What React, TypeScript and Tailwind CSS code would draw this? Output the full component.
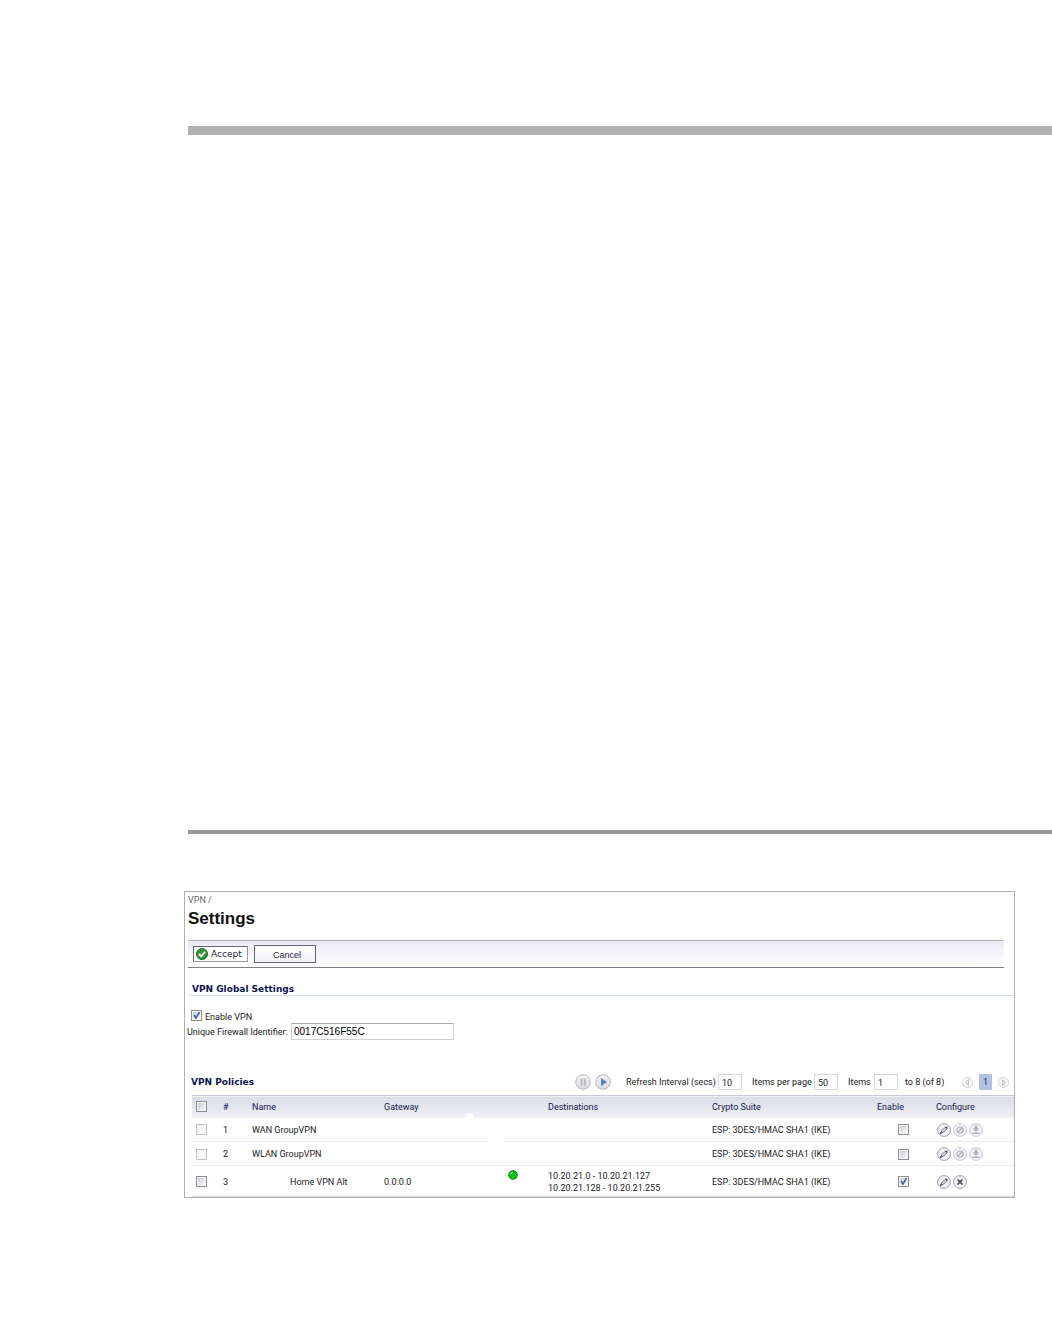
import { useState } from "react";

const policies = [
  { id: 1, name: "WAN GroupVPN", gateway: "", destinations: [], group: true, enabled: false },
  { id: 2, name: "WLAN GroupVPN", gateway: "", destinations: [], group: true, enabled: false },
  {
    id: 3,
    name: "Home VPN Alt",
    gateway: "0.0.0.0",
    destinations: ["10.20.21.0 - 10.20.21.127", "10.20.21.128 - 10.20.21.255"],
    group: false,
    enabled: true,
  },
];

function Checkbox({
  label,
  id,
  defaultChecked = false,
  disabled = false,
}: {
  label: string;
  id?: string;
  defaultChecked?: boolean;
  disabled?: boolean;
}) {
  return (
    <span className="relative block size-[11px]">
      <input
        type="checkbox"
        id={id}
        aria-label={label}
        defaultChecked={defaultChecked}
        disabled={disabled}
        className="peer block size-[11px] appearance-none border border-[#8e8f8f] bg-linear-to-br from-[#c3c8d2] to-white shadow-[inset_0_0_0_1px_#f4f4f4] disabled:border-[#c3c3c3] disabled:from-[#f3f3f3]"
      />
      <svg
        viewBox="0 0 11 11"
        className="pointer-events-none absolute inset-0 hidden size-[11px] peer-checked:block"
      >
        <path d="M3 5l2 3 3.500-6" fill="none" stroke="#4a5fa5" strokeWidth="1.600" />
      </svg>
    </span>
  );
}

function Disc({
  label,
  kind,
  disabled = false,
}: {
  label: string;
  kind: "edit" | "block" | "download" | "delete";
  disabled?: boolean;
}) {
  const ring = disabled ? "#c4c4cc" : "#9a9ba8";
  const ink = disabled ? "#b0b0b8" : "#42434f";
  return (
    <button type="button" aria-label={label} disabled={disabled} className="block size-[14px]">
      <svg viewBox="0 0 14 14" className="block size-[14px]">
        <circle cx="7" cy="7" r="6.400" fill="#f0f0f7" stroke={ring} />
        {kind === "edit" && (
          <g fill="none" stroke={ink}>
            <path d="M4 9.900l.8-2.200 3.400-3.400 1.600 1.600-3.400 3.400z" fill="#e2e2ea" strokeWidth=".8" />
            <path d="M8.700 3.600l1.800 1.800M3.200 10.800l1.300-1.300" strokeWidth="1.300" />
          </g>
        )}
        {kind === "block" && (
          <g fill="none" stroke={ink} strokeWidth="1.200">
            <circle cx="7" cy="7" r="3" />
            <path d="M5 9l4-4" />
          </g>
        )}
        {kind === "download" && (
          <path d="M5.800 2.500h2.400v3h2.300L7 8.800 3.500 5.500h2.300zM3.500 9.500h7V11h-7z" fill={ink} />
        )}
        {kind === "delete" && (
          <path d="M4.500 4.500l5 5M9.500 4.500l-5 5" stroke={ink} strokeWidth="1.700" />
        )}
      </svg>
    </button>
  );
}

function RoundButton({ label, children }: { label: string; children: React.ReactNode }) {
  return (
    <button type="button" aria-label={label} className="block size-4">
      <svg viewBox="0 0 16 16" className="block size-4">
        <defs>
          <linearGradient id="disc" x1="0" y1="0" x2="0" y2="1">
            <stop offset="0" stopColor="#f6f6f8" />
            <stop offset="1" stopColor="#d9d9e0" />
          </linearGradient>
        </defs>
        <circle cx="8" cy="8" r="7.300" fill="url(#disc)" stroke="#b4b4ba" />
        {children}
      </svg>
    </button>
  );
}

function PageArrow({ label, d }: { label: string; d: string }) {
  return (
    <button type="button" aria-label={label} disabled className="block size-[11px]">
      <svg viewBox="0 0 11 11" className="block size-[11px]">
        <circle cx="5.500" cy="5.500" r="5" fill="#fafafa" stroke="#cfcfcf" />
        <path d={d} fill="#e4e4e4" stroke="#b5b5b5" strokeWidth=".8" />
      </svg>
    </button>
  );
}

const smallInput =
  "h-4 w-6 border border-[#d5d6e0] bg-white px-[3px] pt-[2px] text-[9px] leading-3 text-[#222]";

export default function App() {
  const [identifier, setIdentifier] = useState("0017C516F55C");

  return (
    <main className="min-h-screen bg-white pt-[126px] font-[Roboto,sans-serif] text-[9px] leading-3 text-[#222]">
      <div className="ml-[188px] h-[9px] bg-[#b2b2b2]" />
      <div className="mt-[695px] ml-[188px] h-1 bg-[#989898]" />

      <section className="mt-[57px] mr-[37px] ml-[184px] border border-[#b0b0b0] whitespace-nowrap">
        <header className="px-[3px] pt-[2px]">
          <p className="pb-px text-[#666]">VPN /</p>
          <h1 className="font-['Liberation_Sans',sans-serif] text-[17px] leading-6 font-bold text-[#111]">
            Settings
          </h1>
        </header>

        <div className="mt-[9px] mr-[10px] ml-[3px] flex h-7 gap-[6px] border-t border-b border-t-[#b4b4c4] border-b-[#7d7d8b] bg-linear-to-b from-[#ebebf5] to-white px-[5px] pt-1">
          <button
            type="button"
            className="mt-px flex h-4 w-[55px] items-center gap-[3px] border border-[#65656f] border-r-[#999] border-b-[#999] bg-white pl-[2px] font-['DejaVu_Sans',sans-serif] text-[9px] text-[#26263c]"
          >
            <svg viewBox="0 0 12 12" className="size-3">
              <circle cx="6" cy="6" r="5.500" fill="#2f9432" stroke="#1e7324" />
              <path d="M3 6l2.200 2.300L9 3.800" fill="none" stroke="#fff" strokeWidth="2" />
            </svg>
            Accept
          </button>
          <button
            type="button"
            className="h-[18px] w-[62px] border border-[#65656f] bg-linear-to-b from-white to-[#f2f2f6] pt-px pl-1 font-['Liberation_Sans',sans-serif] text-[9px] text-[#26264c]"
          >
            Cancel
          </button>
        </div>

        <h2 className="mt-4 ml-[3px] border-b border-[#d0dde2] pl-1 font-['DejaVu_Sans',sans-serif] text-[9px] leading-[11px] font-bold text-[#0b1450]">
          VPN Global Settings
        </h2>

        <div className="mt-[14px] ml-[6px] flex gap-[3px]">
          <Checkbox id="enable-vpn" label="Enable VPN" defaultChecked />
          <label htmlFor="enable-vpn" className="mt-[2px] leading-[11px]">
            Enable VPN
          </label>
        </div>
        <div className="ml-[2px] flex items-center">
          <label htmlFor="identifier" className="w-[104px]">
            Unique Firewall Identifier:
          </label>
          <input
            id="identifier"
            value={identifier}
            onChange={(e) => setIdentifier(e.target.value)}
            className="h-[17px] w-[163px] border border-[#d0d0d0] border-t-[#aaa] bg-white px-[2px] font-['Liberation_Sans',sans-serif] text-[10px] text-black"
          />
        </div>

        <div className="mt-[34px] flex h-4 items-center pr-[5px] pl-[6px]">
          <h2 className="mr-auto font-['DejaVu_Sans',sans-serif] text-[9px] font-bold text-[#0b1450]">
            VPN Policies
          </h2>
          <div className="mr-[15px] flex gap-1">
            <RoundButton label="Pause">
              <path d="M5.500 4.500h2v7h-2zM8.800 4.500h2v7h-2z" fill="#b7b7bf" />
            </RoundButton>
            <RoundButton label="Refresh">
              <path d="M6 4l6 4-6 4z" fill="#5482c9" />
            </RoundButton>
          </div>
          <label htmlFor="refresh" className="w-[92px]">Refresh Interval (secs)</label>
          <input id="refresh" defaultValue="10" className={smallInput} />
          <label htmlFor="per-page" className="ml-[10px] w-[62px]">Items per page</label>
          <input id="per-page" defaultValue="50" className={smallInput} />
          <label htmlFor="first-item" className="ml-[10px] w-[26px]">Items</label>
          <input id="first-item" defaultValue="1" className={smallInput} />
          <span className="ml-[7px] w-[57px]">to 8 (of 8)</span>
          <PageArrow label="Previous page" d="M6.500 2.500v6l-3-3z" />
          <button type="button" className="mx-[6px] h-4 w-[13px] bg-[#b3c1e3] text-[#22305f]">
            1
          </button>
          <PageArrow label="Next page" d="M4.500 2.500v6l3-3z" />
        </div>

        <div className="mt-[5px] pl-[7px]">
          <table className="w-full table-fixed border-collapse text-left">
            <colgroup>
              <col className="w-[30px]" />
              <col className="w-[30px]" />
              <col className="w-[132px]" />
              <col className="w-[124px]" />
              <col className="w-[40px]" />
              <col />
              <col className="w-[165px]" />
              <col className="w-[59px]" />
              <col className="w-[78px]" />
            </colgroup>
            <thead>
              <tr className="h-[22px] border-t border-[#c5cad8] bg-linear-to-b from-[#dadeea] to-[#f1f1f4] text-[#14184e]">
                <th className="pl-1">
                  <Checkbox label="Select all policies" />
                </th>
                <th className="pl-px font-normal">#</th>
                <th className="font-normal">Name</th>
                <th className="relative font-normal">
                  Gateway
                  <span className="absolute bottom-0 left-[81px] h-[5px] w-2 rounded-t-full bg-white" />
                </th>
                <th />
                <th className="font-normal">Destinations</th>
                <th className="font-normal">Crypto Suite</th>
                <th className="font-normal">Enable</th>
                <th className="font-normal">Configure</th>
              </tr>
            </thead>
            <tbody className="[&_td]:pt-px">
              {policies.map((p) => (
                <tr
                  key={p.id}
                  className={p.group ? "h-6 border-b border-[#ededf0]" : "h-[31px] border-b border-[#d8d8dc]"}
                >
                  <td className="pl-1">
                    <Checkbox label={"Select " + p.name} disabled={p.group} />
                  </td>
                  <td className="pl-px">{p.id}</td>
                  <td className={p.group ? "" : "pl-[38px]"}>{p.name}</td>
                  <td className="relative">
                    {p.gateway}
                    {p.id === 1 && (
                      <span className="absolute -bottom-px left-[105px] h-[2px] w-[15px] bg-white" />
                    )}
                  </td>
                  <td className="align-top">
                    {p.destinations.length > 0 && (
                      <svg viewBox="0 0 10 10" className="mt-[3px] size-[10px]" role="img" aria-label="Active">
                        <circle cx="5" cy="5" r="4.300" fill="#08c414" stroke="#08850f" />
                        <path d="M2.300 4.500a2.500 2.500 0 0 1 2.500-2.200l-1 1.500z" fill="#e5ffe5" />
                      </svg>
                    )}
                  </td>
                  <td>
                    {p.destinations.map((d) => (
                      <div key={d}>{d}</div>
                    ))}
                  </td>
                  <td>ESP: 3DES/HMAC SHA1 (IKE)</td>
                  <td className="pl-[21px]">
                    <Checkbox label={"Enable " + p.name} defaultChecked={p.enabled} />
                  </td>
                  <td>
                    <div className="flex gap-[2px] pl-px">
                      <Disc kind="edit" label="Edit" />
                      {p.group ? (
                        <>
                          <Disc kind="block" label="Delete" disabled />
                          <Disc kind="download" label="Export" disabled />
                        </>
                      ) : (
                        <Disc kind="delete" label="Delete" />
                      )}
                    </div>
                  </td>
                </tr>
              ))}
            </tbody>
          </table>
        </div>
      </section>
    </main>
  );
}
